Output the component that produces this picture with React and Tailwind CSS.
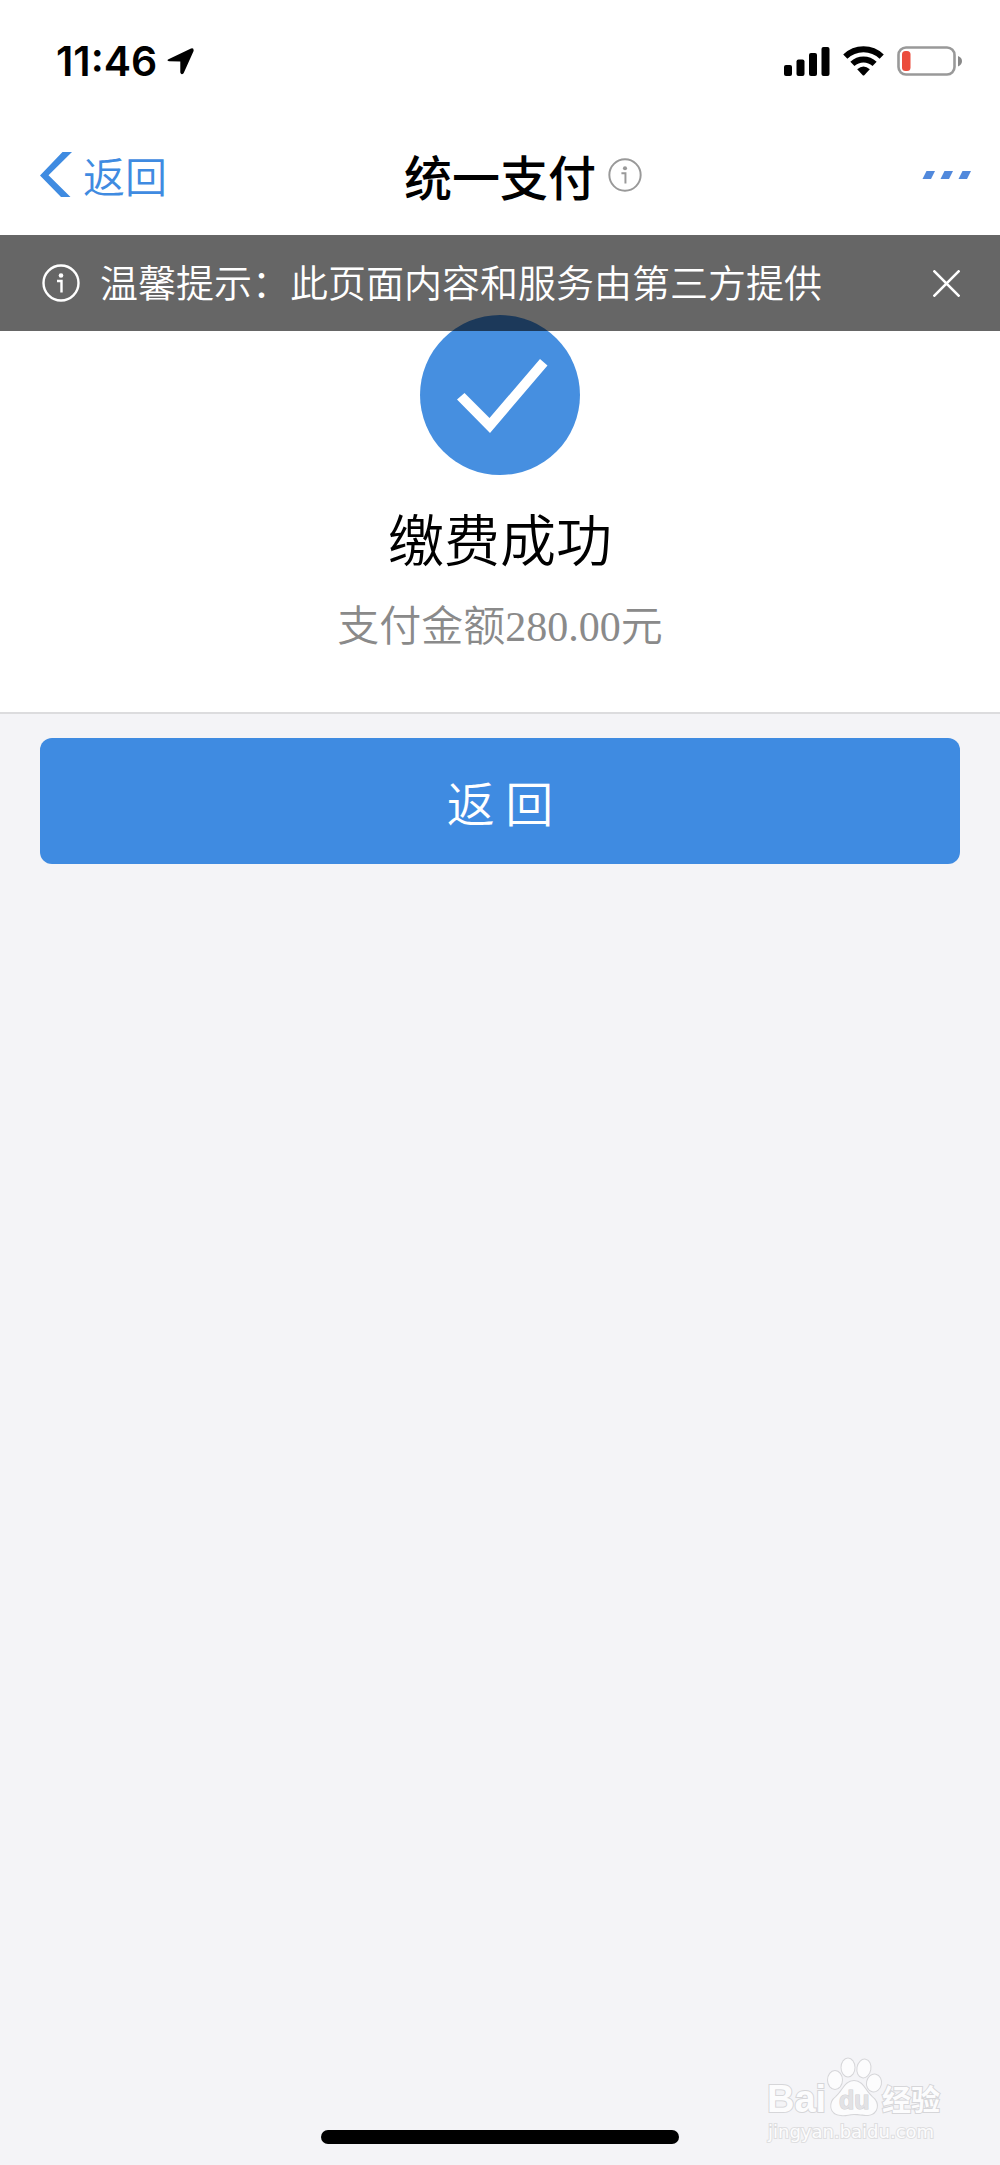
import React from "react";

function StatusBar() {
  return (
    <div className="flex h-[122px] items-center justify-between pr-[37px] pl-14">
      <div className="flex items-center gap-[10px]">
        <time className="font-['Inter',sans-serif] text-[41px] leading-none font-semibold">11:46</time>
        <svg className="h-[27px] w-[27px]" viewBox="0 0 27 27" aria-hidden="true">
          <path d="M1.5 11.2 24 .6Q27-.4 26.6 3L16.6 25.2Q14.4 27.8 13.3 24.6V13.4L2 13.2Q-.8 12.4 1.5 11.2Z" />
        </svg>
      </div>
      <div className="flex items-center gap-[13px]">
        <svg className="h-[29px] w-[46px]" viewBox="0 0 46 29" role="img" aria-label="信号">
          <rect y="18" width="8" height="11" rx="2" />
          <rect x="12.5" y="12.5" width="8" height="16.5" rx="2" />
          <rect x="25" y="6" width="8" height="23" rx="2" />
          <rect x="37.5" width="8" height="29" rx="2" />
        </svg>
        <svg className="h-[30px] w-[41px]" viewBox="0 0 41 30" role="img" aria-label="无线网络">
          <g fill="none" stroke="#000" strokeWidth="6">
            <path d="M2.3 10.6C12.5.8 28.5.8 38.7 10.6" />
            <path d="M9.4 17.9C15.8 11.9 25.2 11.9 31.6 17.9" />
          </g>
          <path d="M14.2 23.2Q20.5 18 26.8 23.2L21.5 29Q20.5 30 19.5 29Z" />
        </svg>
        <svg className="h-[30px] w-[66px]" viewBox="0 0 66 30" role="img" aria-label="电池电量低">
          <rect x="1.5" y="1.5" width="56" height="27" rx="7.5" fill="#fff" stroke="#999" strokeWidth="2.6" />
          <rect x="5" y="5" width="8.5" height="20" rx="3.5" fill="#eb4d3d" />
          <path d="M61 10Q65 11.5 65 15T61 20.5Z" fill="#888" />
        </svg>
      </div>
    </div>
  );
}

function InfoIcon({ className, strokeWidth }) {
  return (
    <svg className={className} viewBox="0 0 38 38" fill="none" stroke="currentColor" strokeWidth={strokeWidth} aria-hidden="true">
      <circle cx="19" cy="19" r="17.5" />
      <circle cx="19" cy="11.5" r="2.3" fill="currentColor" stroke="none" />
      <path d="M15 17H19.5V28.5" />
    </svg>
  );
}

function NavBar() {
  return (
    <header className="grid h-[113px] grid-cols-[1fr_auto_1fr] items-center px-7 pb-2">
      <button type="button" className="flex items-center gap-[11px] justify-self-start pl-3 text-[#3f8be1]">
        <svg className="h-[45px] w-[32px]" viewBox="0 0 32 45" fill="currentColor" aria-hidden="true">
          <path d="M22.5 0H32L8.5 23.3 30.5 45H21L0 23.5Z" />
        </svg>
        <span className="text-[42px] leading-none font-[350]">返回</span>
      </button>
      <h1 className="text-[48px] leading-none font-medium">统一支付</h1>
      <div className="flex items-center justify-between pl-3">
        <button type="button" aria-label="信息" className="text-[#999]">
          <InfoIcon className="h-[34px] w-[34px]" strokeWidth={2.2} />
        </button>
        <button type="button" aria-label="更多">
          <svg className="h-[8px] w-[50px]" viewBox="0 0 50 8" fill="#5189dc" aria-hidden="true">
            <path d="M4.5 0H13L9 8H.5ZM22.5 0H31L27 8H18.5ZM40.5 0H49L45 8H36.5Z" />
          </svg>
        </button>
      </div>
    </header>
  );
}

function Notice() {
  return (
    <aside className="absolute inset-x-0 top-0 flex h-24 items-center bg-black/60 pr-10 pl-[42px] text-white">
      <InfoIcon className="h-[38px] w-[38px] shrink-0" strokeWidth={2.4} />
      <p className="ml-5 flex-1 pb-1 text-[38px] leading-none font-[350]">温馨提示：此页面内容和服务由第三方提供</p>
      <button type="button" aria-label="关闭">
        <svg className="h-[27px] w-[27px]" viewBox="0 0 27 27" stroke="currentColor" strokeWidth="2.6" aria-hidden="true">
          <path d="M.5.5 26.5 26.5M26.5.5.5 26.5" />
        </svg>
      </button>
    </aside>
  );
}

function Watermark() {
  return (
    <svg
      className="absolute right-[52px] bottom-[18px] h-[90px] w-[182px]"
      viewBox="0 0 182 90"
      fill="#fcfcfd"
      stroke="#d6d6d9"
      strokeWidth="2"
      paintOrder="stroke"
      aria-hidden="true"
    >
      <text x="1" y="55" fontSize="38" fontWeight="700" fontFamily="Liberation Sans">Bai</text>
      <g strokeWidth="2">
        <ellipse cx="69" cy="23" rx="7" ry="9" />
        <ellipse cx="82" cy="10.5" rx="6.5" ry="9" />
        <ellipse cx="98" cy="11.5" rx="6.5" ry="9" transform="rotate(10 98 11)" />
        <ellipse cx="108" cy="26" rx="7" ry="8.5" transform="rotate(12 108 26)" />
        <path d="M88 24C97 24 99 34 106 40C114 46 112 57 102 58C96 58 93 57 88 57C82 57 80 59 75 58C63 57 63 45 70 40C77 34 79 24 88 24Z" />
      </g>
      <text x="73" y="52" fontSize="25" fontWeight="700" fontFamily="Liberation Sans" fill="#e2e2e5" stroke="#cfcfd2" strokeWidth="1">du</text>
      <text x="116" y="54" fontSize="29" fontWeight="700" fontFamily="Noto Sans CJK SC">经验</text>
      <text x="2" y="81" fontSize="18" fontFamily="DejaVu Sans" stroke="#dedee0">jingyan.baidu.com</text>
    </svg>
  );
}

export default function App() {
  return (
    <div className="relative flex min-h-screen flex-col bg-[#f4f4f7] font-['Noto_Sans_CJK_SC',sans-serif] text-black">
      <div className="bg-white">
        <StatusBar />
        <NavBar />
      </div>
      <main className="relative">
        <section className="flex flex-col items-center border-b-2 border-[#dcdcde] bg-white pt-20 pb-[61px]">
          <svg className="h-40 w-40" viewBox="0 0 160 160" role="img" aria-label="成功">
            <circle cx="80" cy="80" r="80" fill="#468fe0" />
            <path d="M37 84.5 44.5 78 69.5 103 120 44 127.5 50.5 70 118Z" fill="#fff" />
          </svg>
          <h2 className="mt-8 text-[56px] leading-[60px] font-[350]">缴费成功</h2>
          <p className="mt-9 font-['Liberation_Serif','Noto_Sans_CJK_SC',serif] text-[42px] leading-[48px] font-[350] text-[#8a8a8a]">
            支付金额280.00元
          </p>
        </section>
        <div className="px-10 pt-6">
          <button type="button" className="h-[126px] w-full rounded-xl bg-[#3f8be1] text-[48px] leading-none font-[350] text-white">
            返 回
          </button>
        </div>
        <Notice />
      </main>
      <div className="mx-auto mt-auto mb-[21px] h-[14px] w-[358px] rounded-full bg-black" />
      <Watermark />
    </div>
  );
}
